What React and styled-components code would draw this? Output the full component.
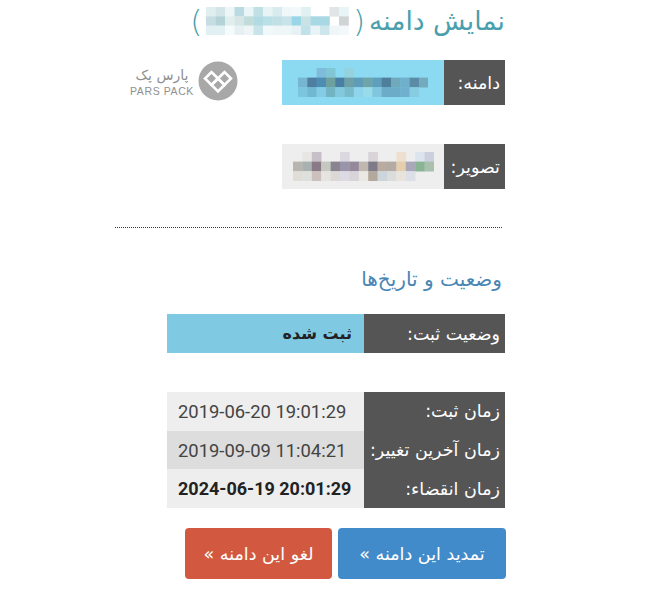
import React from 'react';
import styled, { createGlobalStyle } from 'styled-components';

const GlobalStyle = createGlobalStyle`
    html, body {
        margin: 0;
        padding: 0;
        background: #fff;
    }
`;

const persian = `"DejaVu Sans", "Noto Sans", sans-serif`;

const Page = styled.main`
    width: 650px;
    height: 600px;
    box-sizing: border-box;
    padding: 4px 145px 0 0;
    direction: rtl;
    overflow: hidden;
    font-family: ${persian};
`;

const Title = styled.h1`
    display: flex;
    align-items: center;
    gap: 4px;
    height: 34px;
    margin: 0 0 22px 0;
    font-size: 26.5px;
    font-weight: 400;
    line-height: 34px;
    color: #4a9fae;
    white-space: nowrap;
`;

const Paren = styled.span`
    font-size: 31px;
    font-weight: 300;
`;

const InfoRow = styled.section`
    display: flex;
    align-items: flex-start;
    justify-content: space-between;
    height: 45px;
    margin-bottom: ${({ $gap }) => $gap}px;
`;

const InfoCell = styled.div`
    display: flex;
    flex: none;
    width: 223px;
    height: 45px;
`;

const DarkLabel = styled.div`
    display: flex;
    align-items: center;
    flex: none;
    box-sizing: border-box;
    width: ${({ $w }) => $w}px;
    padding-right: 5px;
    background: #555;
    color: #fff;
    font-size: 17.5px;
    white-space: nowrap;
`;

const InfoValue = styled.div`
    flex: 1;
    display: flex;
    align-items: center;
    justify-content: center;
    background: ${({ $bg }) => $bg};
`;

const Logo = styled.div`
    display: flex;
    flex: none;
    align-items: center;
    gap: 6px;
    height: 42px;
    margin-left: 132px;
    direction: ltr;
`;

const LogoWords = styled.div`
    display: flex;
    flex-direction: column;
    align-items: center;
    width: 60px;
    color: #8f8f8f;
    white-space: nowrap;
`;

const LogoFa = styled.span`
    font-size: 14px;
    line-height: 19px;
    direction: rtl;
`;

const LogoEn = styled.span`
    font-family: "Liberation Sans", sans-serif;
    font-size: 10.5px;
    line-height: 12px;
    letter-spacing: 0.6px;
`;

const Divider = styled.hr`
    width: 387px;
    margin: 0 3px 0 0;
    border: 0;
    border-top: 1px dotted #333;
`;

const SubTitle = styled.h2`
    height: 30px;
    margin: 36px 3px 20px 0;
    font-size: 20px;
    font-weight: 400;
    line-height: 30px;
    color: #4a86b4;
`;

const Table = styled.div`
    display: grid;
    grid-template-columns: 141px 197px;
    width: 338px;
`;

const StatusTable = styled(Table)`
    height: 39px;
    margin-bottom: 39px;
`;

const StatusValue = styled.div`
    display: flex;
    align-items: center;
    padding-right: 12px;
    background: #7fc9e2;
    color: #222;
    font-size: 16px;
    font-weight: 700;
`;

const DateTable = styled(Table)`
    grid-auto-rows: 38.7px;
`;

const DateValue = styled.div`
    display: flex;
    align-items: center;
    padding-left: 11px;
    background: ${({ $alt }) => ($alt ? '#ddd' : '#eee')};
    color: ${({ $strong }) => ($strong ? '#222' : '#444')};
    font-family: Roboto, sans-serif;
    font-size: ${({ $strong }) => ($strong ? 18 : 18.4)}px;
    font-weight: ${({ $strong }) => ($strong ? 700 : 400)};
    direction: ltr;
    white-space: pre;
`;

const Actions = styled.div`
    display: flex;
    gap: 6px;
    margin: 20px -1px 0 0;
`;

const Action = styled.a`
    display: flex;
    align-items: center;
    justify-content: center;
    width: ${({ $w }) => $w}px;
    height: 51px;
    border-radius: 4px;
    background: ${({ $bg }) => $bg};
    color: #fff;
    font-size: 17.5px;
    white-space: nowrap;
`;

const Mosaic = ({ rows, cell, rowH }) => {
    const width = Math.max(...rows.map((r) => r.length)) * cell;
    return (
        <svg width={width} height={rows.length * rowH} style={{ filter: 'blur(.6px)' }}>
            {rows.map((row, y) =>
                row.map((color, x) =>
                    color ? <rect key={`${x}-${y}`} x={x * cell} y={y * rowH} width={cell + 0.3} height={rowH + 0.3} fill={`#${color}`} /> : null
                )
            )}
        </svg>
    );
};

const titleCells = [
    ['e1eef0', 'd4e5e9', 'eef5f6', 'b9dae2', 'eaf5f7', 'c0e0e6', 'e8f3f5', 'd8ebef', 'f0f7f9', 'f3f8fa', 'e0f0f3', '', '', 'e2e5e5', 'e8f4f6'],
    ['c6dde2', 'b4d3d9', 'e0eeee', 'd5e6e4', 'c2dcdc', 'b0dbe3', 'bae0e7', 'c0e0e6', 'c8e4ea', '99d6e8', 'cbe2e4', 'a8d8e4', 'a8d8e4', '', 'd0d4d4'],
    ['e0f0f3', 'e0f0f3', 'f5fafa', 'e6f0f2', 'eef5f6', 'c8e4ea', 'f0f8fa', 'eef6f8', 'eef6f8', 'e6f2f5', 'c0e0ea', 'eaf3f5', 'cde6ec', 'eef6f8', 'f3f8fa'],
];

const domainCells = [
    ['', '', '7fbcdb', '80c6d4', '', '94d2de', '', '', '', '', '', '', '', ''],
    ['76b6d0', '4f7ea0', '4d8db4', '6ea0a0', '4a7fa4', '6fa0a8', '5f9cb8', '6fa4a8', '5e9fbc', '4f7f9a', '70a8bc', '6fb0cc', '5a8ca6', '74aabe'],
    ['7cc5df', '70b8d0', '84cce6', '72b4c2', '84c8de', '78bccc', '8ed4ec', '98dcea', '80c6de', '6cacc8', '6cacc8', '70b0ce', '88cce2', ''],
];

const imageCells = [
    ['', 'e8e6e2', 'c8c0c8', '', '', 'dcd8e0', '', '', 'd8d4d8', '', '', 'eee0d0', '', 'dde4ee', 'ccd0de'],
    ['b8b4b0', 'a8b0b0', '8a7a88', 'c4c8c0', '8a8490', '9a94aa', '94889a', 'c0b8b0', '7e7a88', 'b8aca0', 'b4aca4', 'e4ceac', 'a8a8b8', '88b494', 'a8c0ac'],
    ['e0dcd6', 'dee0de', 'ccc0bc', 'e6e4e0', 'dcd8d6', 'dcdae2', 'd8d4da', 'eae8e2', 'b4a89c', 'ccd4dc', 'dcdcdc', 'e8e4dc', 'dcdfe6', '', ''],
];

const ParsPackMark = () => (
    <svg width="40" height="40" viewBox="0 0 40 40" style={{ flex: 'none' }}>
        <circle cx="20" cy="20" r="19.5" fill="#a8a8a8" />
        <g fill="none" stroke="#fff" strokeWidth="2.6" strokeLinejoin="miter">
            <path d="M20 17.5 L13.5 11 L7 17.5 L13.5 24 Z" />
            <path d="M20 17.5 L26.5 11 L33 17.5 L26.5 24 Z" />
            <path d="M20 17.5 L13.5 24 L20 30.5 L26.5 24 Z" />
        </g>
    </svg>
);

const App = () => (
    <>
        <GlobalStyle />
        <Page>
            <Title>
                نمایش دامنه
                <Paren>(</Paren>
                <Mosaic rows={titleCells} cell={9.5} rowH={9.3} />
                <Paren>)</Paren>
            </Title>

            <InfoRow $gap={39}>
                <InfoCell>
                    <DarkLabel $w={61}>دامنه:</DarkLabel>
                    <InfoValue $bg="#8cdaf2">
                        <Mosaic rows={domainCells} cell={9.3} rowH={9.6} />
                    </InfoValue>
                </InfoCell>
                <Logo>
                    <LogoWords>
                        <LogoFa>پارس پک</LogoFa>
                        <LogoEn>PARS PACK</LogoEn>
                    </LogoWords>
                    <ParsPackMark />
                </Logo>
            </InfoRow>

            <InfoRow $gap={38}>
                <InfoCell>
                    <DarkLabel $w={61}>تصویر:</DarkLabel>
                    <InfoValue $bg="#eee">
                        <Mosaic rows={imageCells} cell={9.4} rowH={9.6} />
                    </InfoValue>
                </InfoCell>
            </InfoRow>

            <Divider />
            <SubTitle>وضعیت و تاریخ‌ها</SubTitle>

            <StatusTable>
                <DarkLabel $w={141}>وضعیت ثبت:</DarkLabel>
                <StatusValue>ثبت شده</StatusValue>
            </StatusTable>

            <DateTable>
                <DarkLabel $w={141}>زمان ثبت:</DarkLabel>
                <DateValue>2019-06-20 19:01:29</DateValue>
                <DarkLabel $w={141}>زمان آخرین تغییر:</DarkLabel>
                <DateValue $alt>2019-09-09 11:04:21</DateValue>
                <DarkLabel $w={141}>زمان انقضاء:</DarkLabel>
                <DateValue $strong>2024-06-19 20:01:29</DateValue>
            </DateTable>

            <Actions>
                <Action $w={168} $bg="#428bca">تمدید این دامنه »</Action>
                <Action $w={147} $bg="#d2593f">لغو این دامنه »</Action>
            </Actions>
        </Page>
    </>
);

export default App;
